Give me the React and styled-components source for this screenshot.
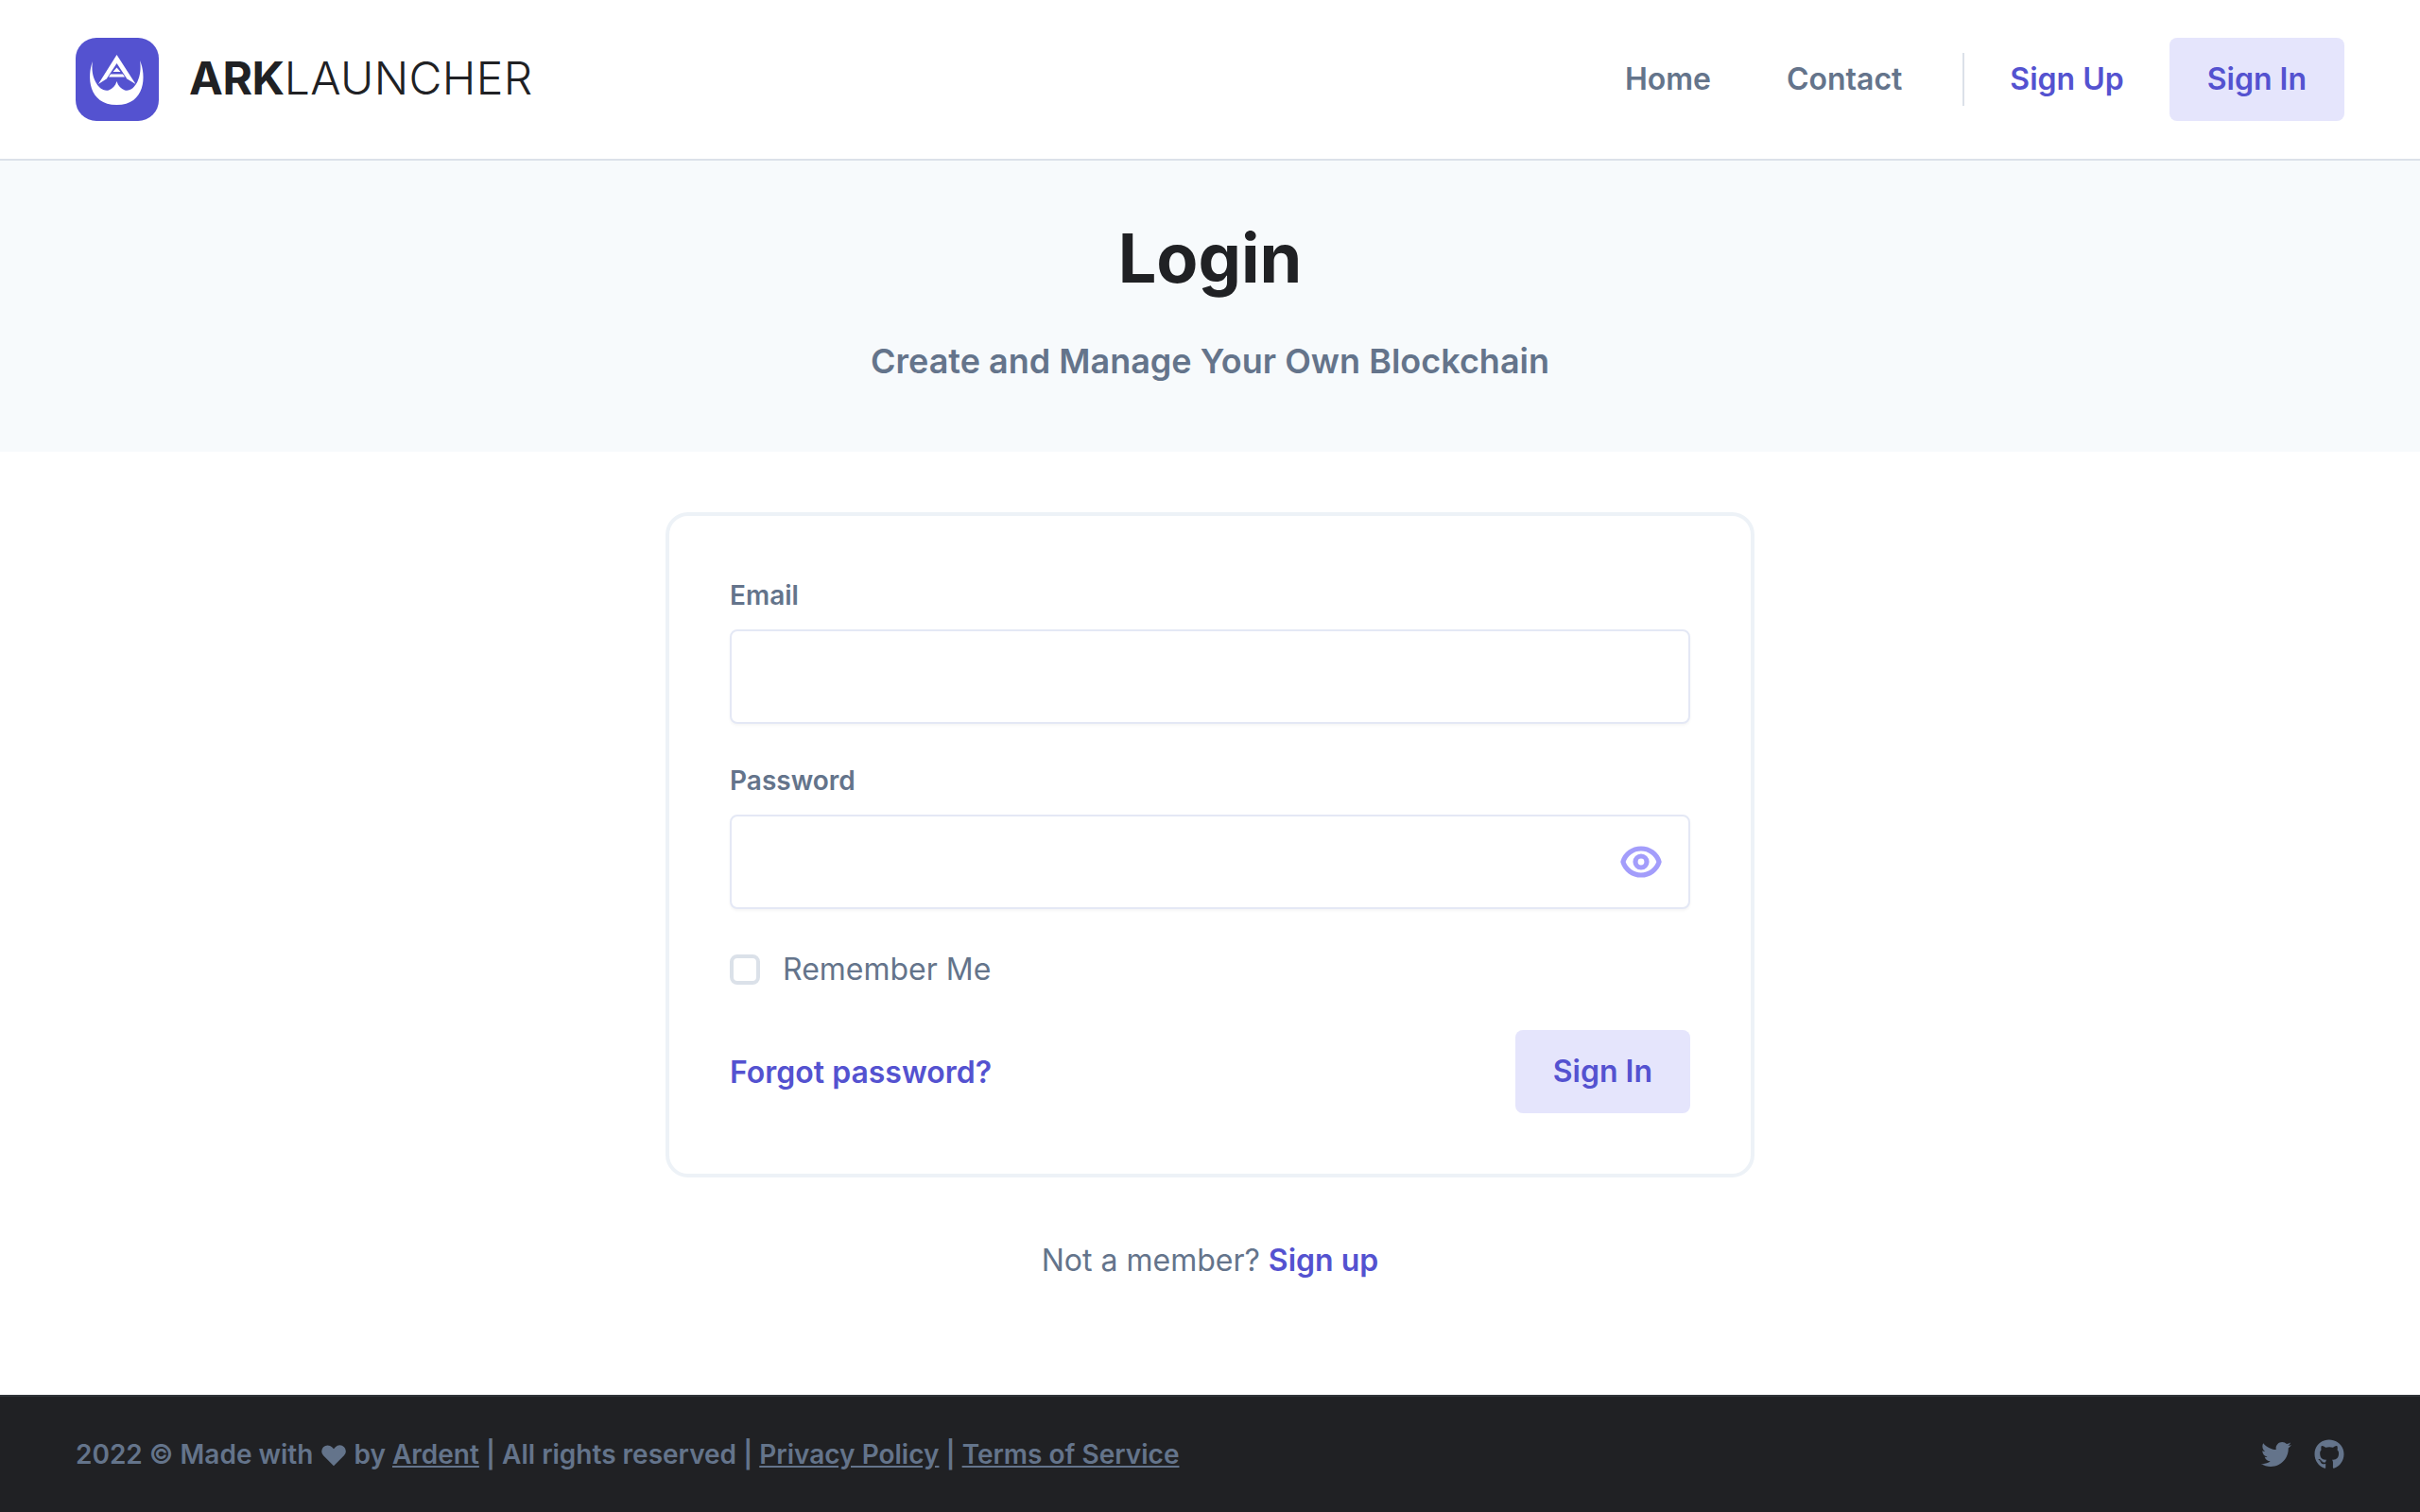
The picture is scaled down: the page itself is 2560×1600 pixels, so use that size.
import React from 'react';
import styled, { createGlobalStyle } from 'styled-components';
import { HiHeart, HiOutlineEye } from 'react-icons/hi';
import { FaTwitter, FaGithub } from 'react-icons/fa';

const GlobalStyle = createGlobalStyle`
    * { box-sizing: border-box; }
    html, body { margin: 0; padding: 0; }
    body {
        font-family: Inter, "Noto Sans", sans-serif;
        color: #64748b;
        background: #fff;
    }
`;

const Page = styled.div`
    display: flex;
    flex-direction: column;
    min-height: 1600px;
`;

const Header = styled.header`
    display: flex;
    align-items: center;
    justify-content: space-between;
    height: 170px;
    padding: 0 80px;
    background: #fff;
    border-bottom: 2px solid #dbe1e9;
`;

const Brand = styled.a`
    display: flex;
    align-items: center;
    gap: 32px;
    font-size: 48px;
    font-weight: 300;
    letter-spacing: 0.4px;
    color: #202124;
    b { font-weight: 700; letter-spacing: -0.4px; }
    span { padding-bottom: 3px; }
`;

const Nav = styled.nav`
    display: flex;
    align-items: center;
    font-size: 32px;
    font-weight: 600;
`;

const NavLink = styled.a`
    color: #64748b;
    margin-right: 80px;
    padding-bottom: 2px;
    &:nth-child(2) { margin-right: 64px; }
`;

const Divider = styled.span`
    width: 2px;
    height: 56px;
    background: #dbe1e9;
    margin-right: 48px;
`;

const SignUpLink = styled.a`
    color: #5452d0;
    margin-right: 48px;
    padding-bottom: 2px;
`;

const SoftButton = styled.button`
    height: 88px;
    padding: 0 40px 2px;
    border: 0;
    border-radius: 8px;
    background: #e5e5fc;
    color: #5452d0;
    font: 600 32px Inter, sans-serif;
`;

const Hero = styled.section`
    display: flex;
    flex-direction: column;
    align-items: center;
    height: 308px;
    padding-top: 63px;
    background: #f7fafc;
`;

const Title = styled.h1`
    margin: 0;
    font-size: 72px;
    line-height: 80px;
    font-weight: 700;
    color: #202124;
`;

const Subtitle = styled.p`
    margin: 41px 0 0;
    font-size: 36px;
    line-height: 56px;
    font-weight: 600;
`;

const Main = styled.main`
    flex: 1;
    display: flex;
    flex-direction: column;
    align-items: center;
    padding-top: 64px;
`;

const Card = styled.form`
    width: 1152px;
    padding: 64px;
    border: 4px solid #edf2f7;
    border-radius: 24px;
`;

const Label = styled.label`
    display: block;
    font-size: 28px;
    line-height: 40px;
    font-weight: 600;
    margin-bottom: 16px;
`;

const InputWrap = styled.div`
    position: relative;
    margin-bottom: ${p => p.$gap}px;
`;

const Input = styled.input`
    display: block;
    width: 100%;
    height: 100px;
    padding: 0 30px;
    background: #fff;
    border: 2px solid #e4e8f5;
    border-radius: 8px;
    box-shadow: 0 2px 3px rgba(0, 0, 0, 0.04);
    outline: 0;
`;

const EyeIcon = styled(HiOutlineEye)`
    position: absolute;
    right: 28px;
    top: 26px;
    width: 48px;
    height: 48px;
    color: #a39dfb;
    stroke-width: 2.6;
`;

const CheckRow = styled.label`
    display: flex;
    align-items: center;
    gap: 24px;
    font-size: 32px;
    line-height: 48px;
    margin-top: 40px;
`;

const CheckBox = styled.span`
    width: 32px;
    height: 32px;
    border: 4px solid #dbe1e9;
    border-radius: 8px;
`;

const Actions = styled.div`
    display: flex;
    align-items: center;
    justify-content: space-between;
    margin-top: 40px;
`;

const TextLink = styled.a`
    color: #5452d0;
    font-weight: 600;
`;

const ForgotLink = styled(TextLink)`
    font-size: 32px;
`;

const Note = styled.p`
    margin: 64px 0 0;
    font-size: 32px;
    line-height: 48px;
`;

const Footer = styled.footer`
    display: flex;
    align-items: center;
    justify-content: space-between;
    height: 124px;
    padding: 0 80px;
    background: #202124;
    border-top: 2px solid #2f3338;
    font-size: 28px;
    font-weight: 600;
`;

const FooterText = styled.div`
    display: flex;
    align-items: center;
    white-space: pre;
    a { color: #64748b; text-decoration: underline; }
`;

const HeartIcon = styled(HiHeart)`
    width: 32px;
    height: 32px;
    margin: 0 -2px 0 6px;
`;

const Socials = styled.div`
    display: flex;
    align-items: center;
    gap: 24px;
    svg { width: 32px; height: 32px; }
`;

function Logo() {
    return (
        <svg width="88" height="88" viewBox="0 0 88 88">
            <rect width="88" height="88" rx="22" fill="#5452d0" />
            <path d="M18 25 C12 40 13 71 43.5 71 C74 71 75 40 68 24 C71 42 62 58 52 55.5 C48 54 45 51 43.5 46 C42 51 39 54 35 55.5 C25 58 15 42 18 25 Z" fill="#fff" />
            <path d="M43.5 18 L63.5 49 L52 42 L35 42 L24 49 Z" fill="#fff" />
            <path d="M43.5 27 L33 43 L54 43 Z" fill="#5452d0" />
            <path d="M43.5 31.5 L47.5 36 L39.5 36 Z M37 38.5 L50 38.5 L52 41.5 L35 41.5 Z" fill="#fff" />
        </svg>
    );
}

export default function App() {
    return (
        <Page>
            <GlobalStyle />
            <Header>
                <Brand>
                    <Logo />
                    <span><b>ARK</b>LAUNCHER</span>
                </Brand>
                <Nav>
                    <NavLink>Home</NavLink>
                    <NavLink>Contact</NavLink>
                    <Divider />
                    <SignUpLink>Sign Up</SignUpLink>
                    <SoftButton type="button">Sign In</SoftButton>
                </Nav>
            </Header>
            <Hero>
                <Title>Login</Title>
                <Subtitle>Create and Manage Your Own Blockchain</Subtitle>
            </Hero>
            <Main>
                <Card>
                    <Label>Email</Label>
                    <InputWrap $gap={40}>
                        <Input type="email" />
                    </InputWrap>
                    <Label>Password</Label>
                    <InputWrap $gap={0}>
                        <Input type="password" />
                        <EyeIcon />
                    </InputWrap>
                    <CheckRow>
                        <CheckBox />
                        Remember Me
                    </CheckRow>
                    <Actions>
                        <ForgotLink>Forgot password?</ForgotLink>
                        <SoftButton type="button">Sign In</SoftButton>
                    </Actions>
                </Card>
                <Note>Not a member? <TextLink>Sign up</TextLink></Note>
            </Main>
            <Footer>
                <FooterText>
                    2022 © Made with<HeartIcon /> by <a>Ardent</a> | All rights reserved | <a>Privacy Policy</a> | <a>Terms of Service</a>
                </FooterText>
                <Socials>
                    <FaTwitter />
                    <FaGithub />
                </Socials>
            </Footer>
        </Page>
    );
}
